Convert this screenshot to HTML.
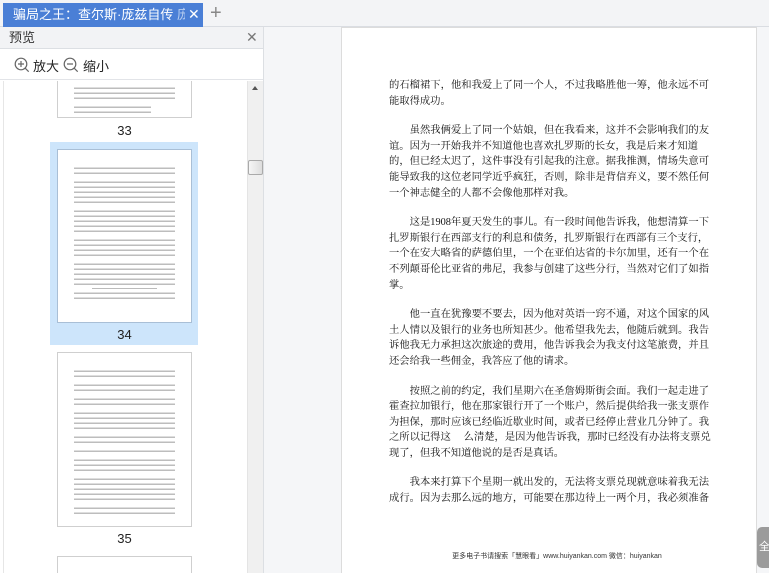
<!DOCTYPE html>
<html><head><meta charset="utf-8"><style>
*{margin:0;padding:0;box-sizing:border-box}
body{width:769px;height:573px;overflow:hidden;position:relative;background:#f5f6f8;font-family:"Liberation Sans","Noto Sans CJK SC",sans-serif}
.abs{position:absolute}
#tabbar{left:0;top:0;width:769px;height:27px;background:#f3f4f6;border-bottom:1px solid #dadde2}
#tab{left:3px;top:3px;width:200px;height:24px;background:#4a7fd6}
#tabt{left:13px;top:3px;width:172px;height:24px;color:#fff;font-size:13px;line-height:24px;white-space:nowrap;overflow:hidden}
#tabt .fade{color:#b9cff0}
#tabx{left:188px;top:3px;color:#fff;font-size:14px;line-height:23px}
#plus{left:210px;top:1px;color:#888;font-size:20px;line-height:24px;font-weight:300}
#side{left:0;top:27px;width:264px;height:546px;background:#fff;border-right:1px solid #dcdfe3}
#shead{left:0;top:0;width:263px;height:22px;background:#f2f3f5;border-bottom:1px solid #dcdfe3;font-size:13px;line-height:21px;padding-left:9px;color:#333}
#sx{left:246px;top:0;color:#777;font-size:14px;line-height:21px}
#tools{left:0;top:23px;width:263px;height:30px;border-bottom:1px solid #e2e4e8;font-size:13px;color:#222}
.thumbs{left:0;top:54px;width:247px;height:492px;overflow:hidden}
.th{position:absolute;left:57px;width:135px;background:#fff;border:1px solid #cfcfcf}
.lbl{position:absolute;left:57px;width:135px;text-align:center;font-size:13px;color:#222}
.blk{margin:0 16px 4px 16px;background:repeating-linear-gradient(#fff 0 1.5px,#bdbdbd 1.5px 2.8px,#fff 2.8px 5px)}
#sb{left:247px;top:54px;width:16px;height:492px;background:#f0f0f0;border-left:1px solid #e4e4e4}
#page{left:341px;top:27px;width:416px;height:546px;background:#fff;border:1px solid #dcdcdc;border-bottom:none}
.txt{position:absolute;left:389px;top:78px;width:320px;font-family:"Liberation Serif","Noto Serif CJK SC",serif;font-size:10.3px;line-height:15.6px;color:#111}
.txt p{margin-bottom:14px}
.txt span{display:block;text-align:justify;text-align-last:justify;white-space:nowrap}
.txt span.l{text-align-last:left}
#foot{left:341px;width:416px;top:551px;text-align:center;font-size:7px;color:#333;padding-left:16px}
#rt{left:757px;top:527px;width:14px;height:41px;background:#9b9b9b;border-radius:5px 0 0 5px;color:#fff;font-size:11px;line-height:41px;padding-left:2px;overflow:hidden}
</style></head><body>
<div id="tabbar" class="abs"></div>
<div id="tab" class="abs"></div>
<div id="tabt" class="abs">骗局之王：查尔斯·庞兹自传 <span class="fade">庞臣</span></div>
<div id="tabx" class="abs">✕</div>
<div id="plus" class="abs">+</div>

<div id="side" class="abs">
  <div id="shead" class="abs">预览</div>
  <div id="sx" class="abs">✕</div>
  <div id="tools" class="abs">
    <svg class="abs" style="left:14px;top:7px" width="16" height="16" viewBox="0 0 16 16"><circle cx="7" cy="7" r="5.8" fill="none" stroke="#666" stroke-width="1.2"/><path d="M4 7h6M7 4v6M11.2 11.2l3.5 3.5" stroke="#666" stroke-width="1.2"/></svg>
    <div class="abs" style="left:33px;top:6px">放大</div>
    <svg class="abs" style="left:63px;top:7px" width="16" height="16" viewBox="0 0 16 16"><circle cx="7" cy="7" r="5.8" fill="none" stroke="#666" stroke-width="1.2"/><path d="M4 7h6M11.2 11.2l3.5 3.5" stroke="#666" stroke-width="1.2"/></svg>
    <div class="abs" style="left:83px;top:6px">缩小</div>
  </div>
  <div class="abs" style="left:3px;top:54px;width:1px;height:492px;background:#e6e6e6"></div>
  <div class="thumbs abs">
    <div class="th" style="top:-30px;height:67px;padding-top:10px"><div class="blk" style="height:20px"></div><div class="blk" style="height:15px"></div><div class="blk" style="height:10px;margin-right:40px"></div></div>
    <div class="lbl" style="top:42px">33</div>
    <div class="abs" style="left:50px;top:61px;width:148px;height:203px;background:#cde5fb"></div>
    <div class="th" style="top:68px;height:174px;padding-top:16px;border-color:#a9bfd6">
      <div class="blk" style="height:10px"></div><div class="blk" style="height:25px"></div><div class="blk" style="height:25px"></div><div class="blk" style="height:20px"></div><div class="blk" style="height:25px"></div><div class="blk" style="height:10px"></div>
      <div style="position:absolute;left:34px;right:34px;top:138px;height:1px;background:#bbb"></div>
    </div>
    <div class="lbl" style="top:246px">34</div>
    <div class="th" style="top:271px;height:175px;padding-top:16px">
      <div class="blk" style="height:10px"></div><div class="blk" style="height:10px"></div><div class="blk" style="height:10px"></div><div class="blk" style="height:20px"></div><div class="blk" style="height:10px"></div><div class="blk" style="height:5px"></div><div class="blk" style="height:15px"></div><div class="blk" style="height:25px"></div><div class="blk" style="height:10px"></div>
    </div>
    <div class="lbl" style="top:450px">35</div>
    <div class="th" style="top:475px;height:40px"></div>
  </div>
  <div id="sb" class="abs">
    <div class="abs" style="left:4px;top:5px;width:0;height:0;border-left:3px solid transparent;border-right:3px solid transparent;border-bottom:4px solid #555"></div>
    <div class="abs" style="left:0;top:79px;width:15px;height:15px;background:linear-gradient(90deg,#f6f6f6,#ddd);border:1px solid #aaa;border-radius:2px"></div>
  </div>
</div>

<div id="page" class="abs"></div>
<div class="txt">
<p><span>的石榴裙下，他和我爱上了同一个人，不过我略胜他一筹，他永远不可</span><span class="l">能取得成功。</span></p>
<p><span>　　虽然我俩爱上了同一个姑娘，但在我看来，这并不会影响我们的友</span><span class="l">谊。因为一开始我并不知道他也喜欢扎罗斯的长女，我是后来才知道</span><span>的，但已经太迟了，这件事没有引起我的注意。据我推测，情场失意可</span><span>能导致我的这位老同学近乎疯狂，否则，除非是背信弃义，要不然任何</span><span class="l">一个神志健全的人都不会像他那样对我。</span></p>
<p><span>　　这是1908年夏天发生的事儿。有一段时间他告诉我，他想清算一下</span><span class="l">扎罗斯银行在西部支行的利息和债务，扎罗斯银行在西部有三个支行，</span><span>一个在安大略省的萨德伯里，一个在亚伯达省的卡尔加里，还有一个在</span><span>不列颠哥伦比亚省的弗尼，我参与创建了这些分行，当然对它们了如指</span><span class="l">掌。</span></p>
<p><span>　　他一直在犹豫要不要去，因为他对英语一窍不通，对这个国家的风</span><span>土人情以及银行的业务也所知甚少。他希望我先去，他随后就到。我告</span><span>诉他我无力承担这次旅途的费用，他告诉我会为我支付这笔旅费，并且</span><span class="l">还会给我一些佣金，我答应了他的请求。</span></p>
<p><span>　　按照之前的约定，我们星期六在圣詹姆斯街会面。我们一起走进了</span><span>霍查拉加银行，他在那家银行开了一个账户，然后提供给我一张支票作</span><span>为担保，那时应该已经临近歇业时间，或者已经停止营业几分钟了。我</span><span>之所以记得这　 么清楚，是因为他告诉我，那时已经没有办法将支票兑</span><span class="l">现了，但我不知道他说的是否是真话。</span></p>
<p><span>　　我本来打算下个星期一就出发的，无法将支票兑现就意味着我无法</span><span>成行。因为去那么远的地方，可能要在那边待上一两个月，我必须准备</span></p>
</div>
<div id="foot" class="abs">更多电子书请搜索「慧眼看」www.huiyankan.com 微信：huiyankan</div>
<div id="rt" class="abs">全</div>
</body></html>
